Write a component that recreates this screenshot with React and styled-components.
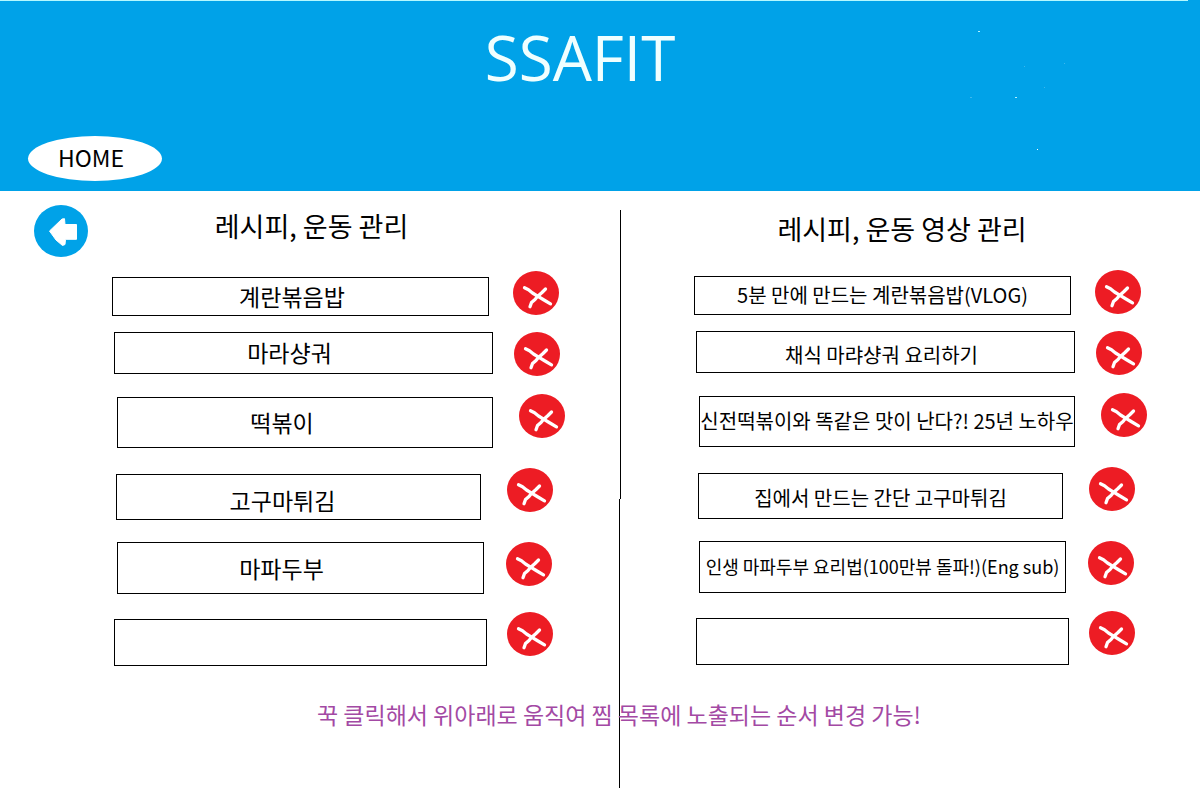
import React from "react";
import styled, { createGlobalStyle } from "styled-components";

const GlobalStyle = createGlobalStyle`
  * { box-sizing: border-box; }
  body {
    margin: 0;
    background: #fff;
    color: #000;
    font-family: "Noto Sans CJK KR", "Noto Sans", sans-serif;
  }
`;

const Header = styled.header`
  position: relative;
  display: flex;
  flex-direction: column;
  justify-content: space-between;
  height: 191px;
  padding-bottom: 10px;
  background: #00a2e8;
`;

const TopLine = styled.div`
  height: 1px;
  margin-right: 12px;
  background: #b4f8ff;
`;

const Title = styled.h1`
  margin: 0;
  padding: 20px 40px 0 0;
  text-align: center;
  font-family: "Open Sans", "Noto Sans", sans-serif;
  font-size: 62px;
  font-weight: 400;
  line-height: 72px;
  color: #f0ffff;
`;

const HomeLink = styled.a`
  display: flex;
  align-items: center;
  justify-content: center;
  width: 134px;
  height: 45px;
  margin-left: 28px;
  padding: 0 8px 4px 0;
  border-radius: 50%;
  background: #fff;
  color: #000;
  font-size: 23px;
  line-height: 28px;
  text-decoration: none;
`;

const Specks = styled.svg`
  position: absolute;
  top: 0;
  right: 120px;
  width: 120px;
  height: 160px;
`;

const Main = styled.main`
  display: grid;
  grid-template-columns: minmax(0, 31fr) minmax(0, 29fr);
  grid-template-rows: auto 122px;
  padding-bottom: 12px;
`;

const Divider = styled.div`
  grid-column: 2;
  grid-row: 1 / 3;
  display: flex;
  flex-direction: column;
  width: 2px;
  margin: 19px 0 0 -1px;

  &::before,
  &::after {
    content: "";
    width: 1px;
    background: #000;
  }
  &::before {
    flex: 1;
    margin-left: 1px;
  }
  &::after {
    flex: 1;
  }
`;

const Panel = styled.section`
  grid-column: ${(p) => p.$column};
  grid-row: 1;
  padding-top: 14px;
`;

const PanelHead = styled.div`
  display: flex;
  align-items: flex-start;
  height: ${(p) => p.$height}px;
  padding: ${(p) => p.$padding};
`;

const BackButton = styled.button`
  width: 54px;
  height: 52px;
  padding: 0;
  border: 0;
  border-radius: 50%;
  background: #00a2e8;
  cursor: pointer;

  svg { display: block; }
`;

const Heading = styled.h2`
  flex: 1;
  margin: 0;
  text-align: center;
  font-size: 27px;
  font-weight: 400;
  line-height: ${(p) => p.$line}px;
  white-space: nowrap;
`;

const List = styled.ul`
  margin: 0;
  padding: 0 ${(p) => p.$end}px 0 ${(p) => p.$start}px;
  list-style: none;
`;

const Row = styled.li`
  display: flex;
  align-items: flex-start;
  gap: ${(p) => p.$gap}px;
  height: ${(p) => p.$height}px;
  padding: 0 ${(p) => p.$right}px 0 ${(p) => p.$left}px;
`;

const ItemBox = styled.div`
  flex: 1;
  min-width: 0;
  display: flex;
  align-items: center;
  justify-content: center;
  height: ${(p) => p.$height}px;
  margin-top: ${(p) => p.$top}px;
  padding: ${(p) => p.$drop || 0}px ${(p) => p.$trail || 0}px 2px 0;
  border: 1px solid #000;
  font-size: ${(p) => p.$size}px;
  line-height: 28px;
  white-space: nowrap;
`;

const DeleteButton = styled.button`
  flex: none;
  width: 46px;
  height: 44px;
  padding: 0;
  border: 0;
  border-radius: 50%;
  background: #ed1c24;
  cursor: pointer;

  svg { display: block; }
`;

const Note = styled.p`
  grid-column: 1 / -1;
  grid-row: 2;
  z-index: 1;
  margin: 0;
  padding: 32px 0 0 38px;
  text-align: center;
  font-size: 23px;
  line-height: 32px;
  color: #a349a4;
`;

// Hand-placed geometry of the six slots, shared by both lists.
const slots = [
  { row: 61, top: 6, height: 39, left: 0, gap: 24, right: 59 },
  { row: 62, top: 0, height: 42, left: 2, gap: 21, right: 58 },
  { row: 74, top: 3, height: 51, left: 5, gap: 26, right: 53 },
  { row: 74, top: 6, height: 46, left: 4, gap: 26, right: 65 },
  { row: 70, top: 0, height: 52, left: 5, gap: 22, right: 66 },
  { row: 54, top: 7, height: 47, left: 2, gap: 20, right: 65 },
];

const recipes = [
  { text: "계란볶음밥", size: 23, trail: 17 },
  { text: "마라샹궈", size: 23, trail: 28 },
  { text: "떡볶이", size: 23, trail: 46 },
  { text: "고구마튀김", size: 23, trail: 32, drop: 8 },
  { text: "마파두부", size: 23, trail: 38, drop: 2 },
  { text: "", size: 23 },
];

const videos = [
  { text: "5분 만에 만드는 계란볶음밥(VLOG)", size: 20 },
  { text: "채식 마랴샹궈 요리하기", size: 20, trail: 8, drop: 8 },
  { text: "신전떡볶이와 똑같은 맛이 난다?! 25년 노하우", size: 20 },
  { text: "집에서 만드는 간단 고구마튀김", size: 20, drop: 6 },
  { text: "인생 마파두부 요리법(100만뷰 돌파!)(Eng sub)", size: 18 },
  { text: "", size: 20 },
];

function CrossIcon() {
  return (
    <svg width="46" height="44" viewBox="0 0 46 44" fill="none" stroke="#fff" strokeWidth="3.3" strokeLinecap="round" strokeLinejoin="round" aria-hidden="true">
      <path d="M11.5 16.8L15.5 18.8L19.5 22L25 25.3L31 29L37.5 32.8" />
      <path d="M32.5 18L29 21.5L24 26L22 28.5L18.5 31.5L17 35.8" />
    </svg>
  );
}

function ArrowIcon() {
  return (
    <svg width="54" height="52" viewBox="0 0 54 52" aria-hidden="true">
      <path
        d="M15.5 26L28 14L30.5 13.7L31 19.5H42.5V34.3H31.5L31 39.5L28.5 40.5L22 35Z"
        fill="#fff"
        stroke="#fff"
        strokeLinejoin="round"
      />
    </svg>
  );
}

function ItemList({ items, start, end }) {
  return (
    <List $start={start} $end={end}>
      {items.map((item, i) => {
        const s = slots[i];
        return (
          <Row key={i} $height={s.row} $gap={s.gap} $left={s.left} $right={s.right}>
            <ItemBox
              $height={s.height}
              $top={s.top}
              $size={item.size}
              $trail={item.trail}
              $drop={item.drop}
            >
              {item.text}
            </ItemBox>
            <DeleteButton type="button" aria-label="삭제">
              <CrossIcon />
            </DeleteButton>
          </Row>
        );
      })}
    </List>
  );
}

export default function App() {
  return (
    <>
      <GlobalStyle />
      <Header>
        <div>
          <TopLine />
          <Title>SSAFIT</Title>
        </div>
        <HomeLink href="#home">HOME</HomeLink>
        <Specks viewBox="0 0 120 160" aria-hidden="true">
          <path d="M18 31.5h2M55 97.5h2" stroke="#b4f0ff" />
          <path d="M77 149.5h1" stroke="#fff" />
          <path d="M10 97.5h2M64 66.5h1M104 63.5h1M84 87.5h1" stroke="#3cb8ee" />
        </Specks>
      </Header>
      <Main>
        <Panel $column={1}>
          <PanelHead $height={66} $padding="0 85px 0 34px">
            <BackButton type="button" aria-label="뒤로">
              <ArrowIcon />
            </BackButton>
            <Heading $line={42}>레시피, 운동 관리</Heading>
          </PanelHead>
          <ItemList items={recipes} start={112} end={2} />
        </Panel>
        <Divider />
        <Panel $column={2}>
          <PanelHead $height={65} $padding="0 16px 0 0">
            <Heading $line={48}>레시피, 운동 영상 관리</Heading>
          </PanelHead>
          <ItemList items={videos} start={74} end={0} />
        </Panel>
        <Note>꾹 클릭해서 위아래로 움직여 찜 목록에 노출되는 순서 변경 가능!</Note>
      </Main>
    </>
  );
}
